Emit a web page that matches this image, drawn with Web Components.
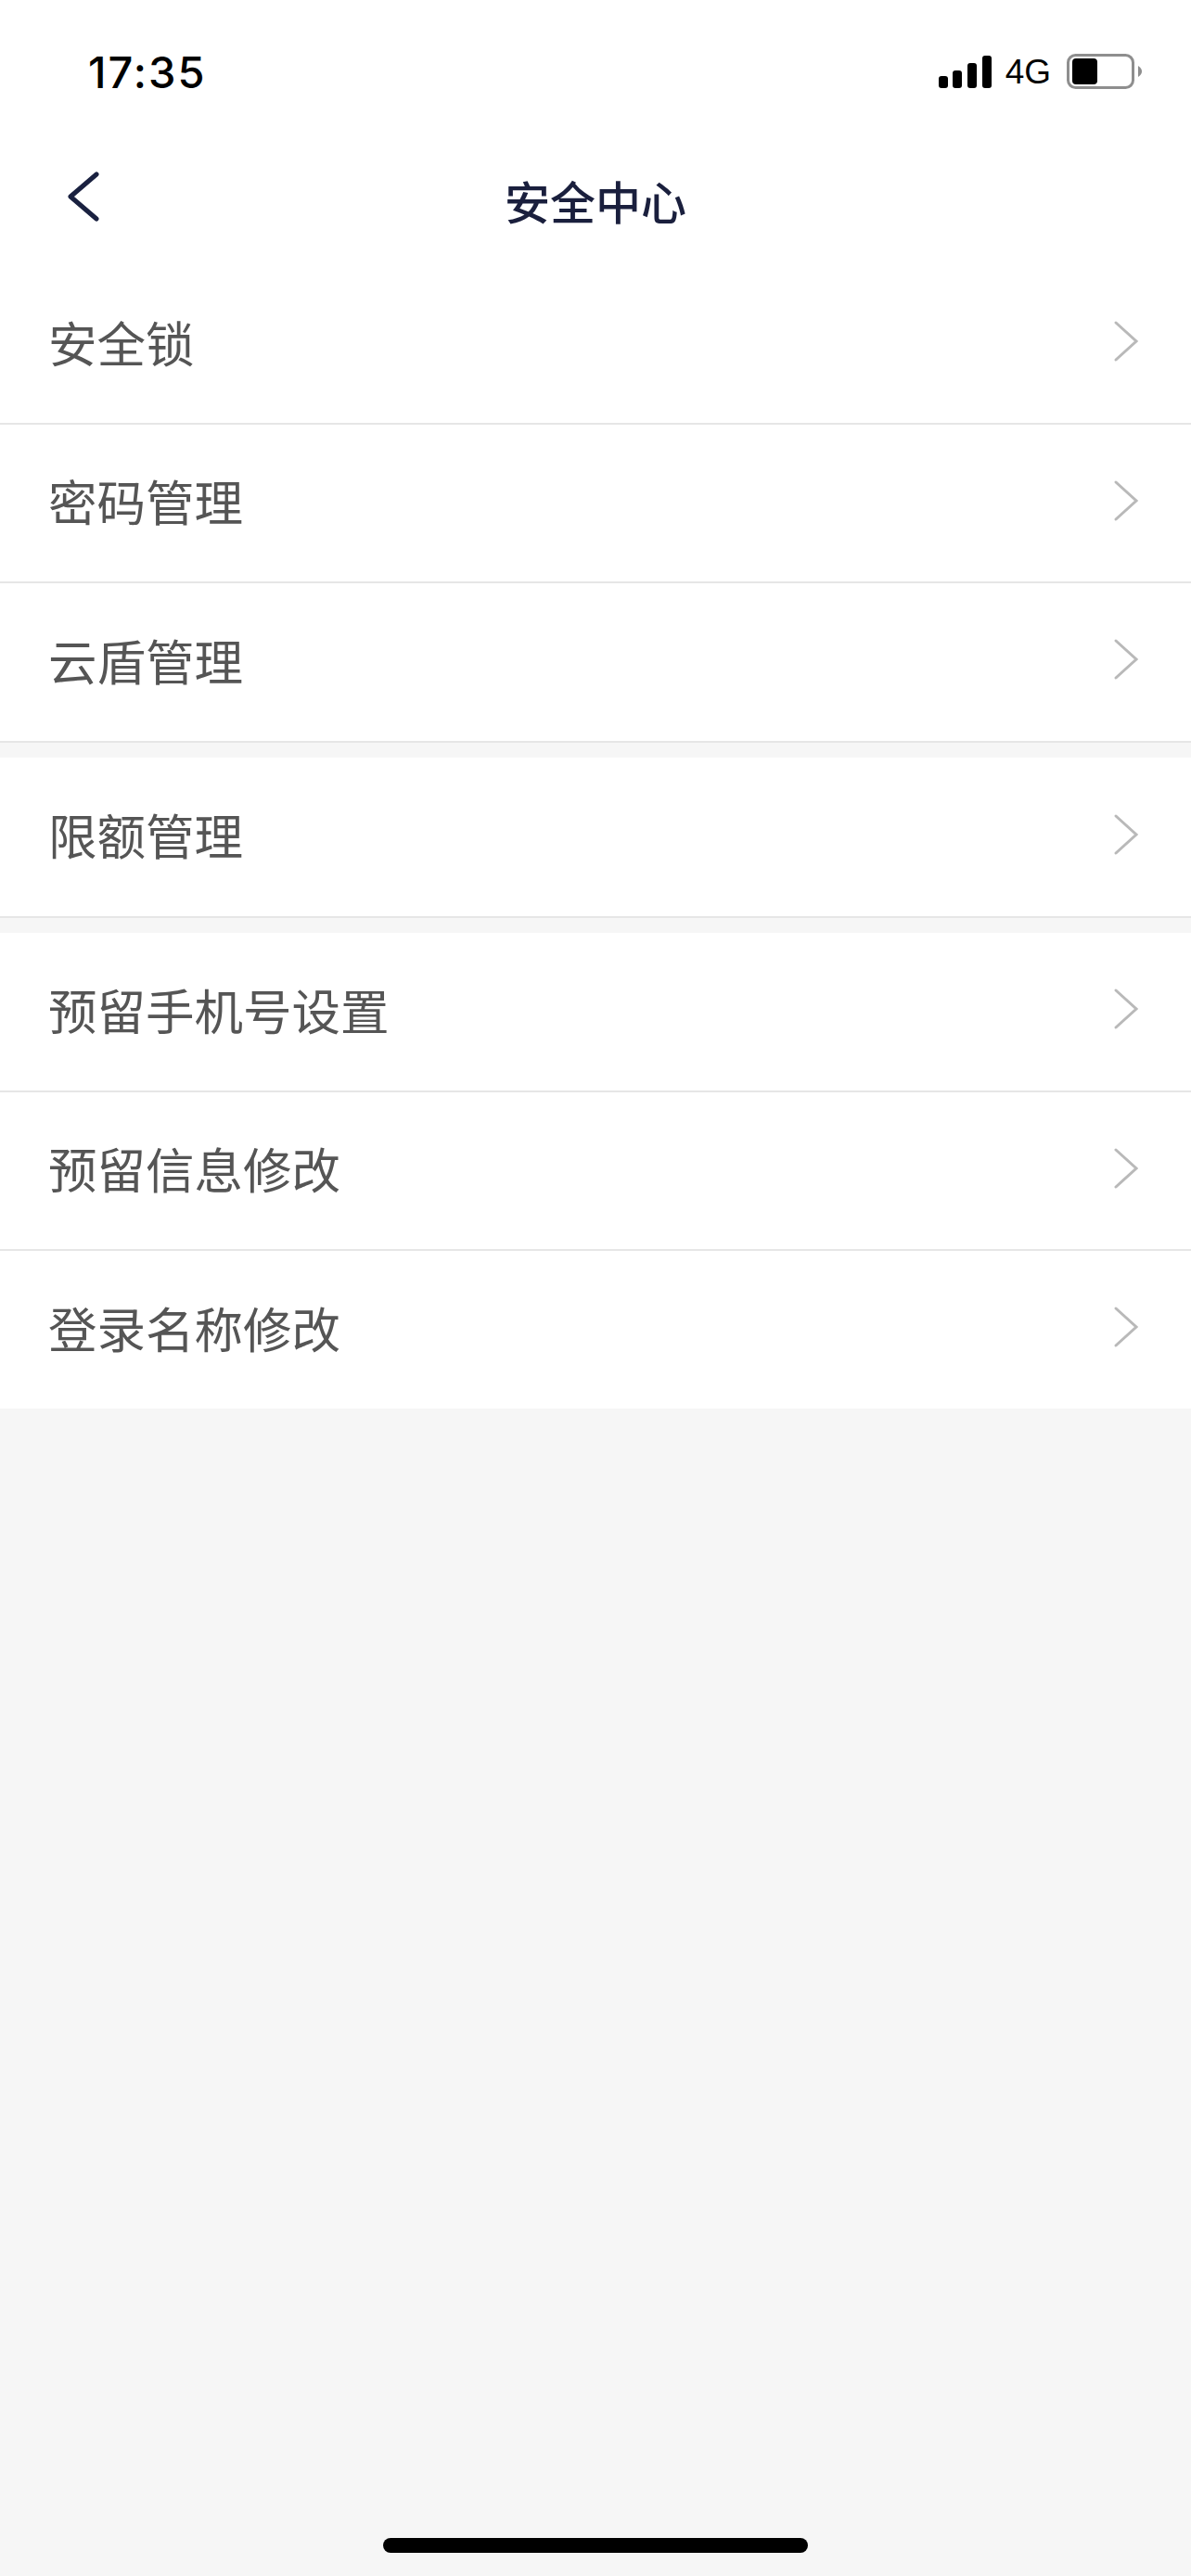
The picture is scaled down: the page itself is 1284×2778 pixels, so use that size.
<!DOCTYPE html>
<html lang="zh">
<head>
<meta charset="utf-8">
<title>安全中心</title>
<style>
  html, body { margin: 0; padding: 0; }
  body {
    width: 1284px;
    height: 2778px;
    overflow: hidden;
    display: flex;
    flex-direction: column;
    background: #f6f6f6;
    font-family: "Noto Sans CJK SC", "Liberation Sans", sans-serif;
  }
</style>
</head>
<body>
  <status-bar time="17:35" network="4G"></status-bar>
  <nav-header title="安全中心"></nav-header>

  <menu-group>
    <menu-row height="172">安全锁</menu-row>
    <menu-row height="171">密码管理</menu-row>
    <menu-row height="172">云盾管理</menu-row>
  </menu-group>
  <menu-group>
    <menu-row height="173">限额管理</menu-row>
  </menu-group>
  <menu-group>
    <menu-row height="172">预留手机号设置</menu-row>
    <menu-row height="171">预留信息修改</menu-row>
    <menu-row height="170" last>登录名称修改</menu-row>
  </menu-group>

  <home-indicator></home-indicator>

<script>
class StatusBar extends HTMLElement {
  constructor() {
    super();
    this.attachShadow({ mode: 'open' });
  }

  connectedCallback() {
    const time = this.getAttribute('time');
    const network = this.getAttribute('network');

    this.shadowRoot.innerHTML = `
      <style>
        :host {
          display: flex;
          align-items: center;
          justify-content: space-between;
          height: 122px;
          padding: 32px 53px 0 95px;
          box-sizing: border-box;
          background: #fff;
          color: #000;
          font-family: "Liberation Sans", Arial, sans-serif;
        }
        .time {
          font-family: Inter, "Liberation Sans", sans-serif;
          font-size: 47px;
          font-weight: 500;
          line-height: 1;
          letter-spacing: 2px;
        }
        .right {
          display: flex;
          align-items: center;
        }
        .signal {
          display: flex;
          align-items: flex-end;
          gap: 5.6px;
          margin-right: 15px;
        }
        .signal i {
          display: block;
          width: 10px;
          background: #000;
          border-radius: 3px;
        }
        .network {
          font-size: 37px;
          line-height: 1;
          margin-right: 17px;
        }
        .battery {
          display: block;
        }
      </style>
      <span class="time">${time}</span>
      <div class="right">
        <div class="signal">
          <i style="height:13px"></i><i style="height:19px"></i><i style="height:27px"></i><i style="height:35px"></i>
        </div>
        <span class="network">${network}</span>
        <svg class="battery" width="81" height="38" viewBox="0 0 81 38">
          <rect x="1.5" y="1.5" width="70" height="35" rx="8" fill="none" stroke="#8e8e8e" stroke-width="3"/>
          <rect x="6" y="5" width="27" height="28" rx="4" fill="#000"/>
          <path d="M77 13 C80 15 81 17 81 19 C81 21 80 23 77 25 Z" fill="#8e8e8e"/>
        </svg>
      </div>
    `;
  }
}

class NavHeader extends HTMLElement {
  constructor() {
    super();
    this.attachShadow({ mode: 'open' });
  }

  connectedCallback() {
    const title = this.getAttribute('title');

    this.shadowRoot.innerHTML = `
      <style>
        :host {
          display: grid;
          grid-template-columns: 1fr auto 1fr;
          align-items: center;
          height: 164px;
          padding-top: 22px;
          box-sizing: border-box;
          background: #fff;
        }
        .back {
          display: block;
          margin-left: 72px;
          margin-top: -6px;
        }
        h1 {
          margin: 0;
          font-family: "Noto Sans CJK SC", "Liberation Sans", sans-serif;
          font-size: 49px;
          font-weight: 500;
          line-height: 1;
          color: #1a1f3d;
        }
      </style>
      <svg class="back" width="36" height="54" viewBox="0 0 36 54">
        <path d="M32 3 L4 27 L32 51" fill="none" stroke="#1a2140" stroke-width="5" stroke-linecap="round" stroke-linejoin="round"/>
      </svg>
      <h1>${title}</h1>
      <span></span>
    `;
  }
}

class MenuGroup extends HTMLElement {
  constructor() {
    super();
    this.attachShadow({ mode: 'open' });
    this.shadowRoot.innerHTML = `
      <style>
        :host {
          display: block;
          background: #fff;
          margin-bottom: 16px;
        }
      </style>
      <slot></slot>
    `;
  }
}

class MenuRow extends HTMLElement {
  constructor() {
    super();
    this.attachShadow({ mode: 'open' });
  }

  connectedCallback() {
    const height = this.getAttribute('height') || 171;
    const last = this.hasAttribute('last');

    this.shadowRoot.innerHTML = `
      <style>
        :host {
          display: flex;
          align-items: center;
          justify-content: space-between;
          height: ${height}px;
          box-sizing: border-box;
          padding: 0 56px 0 52px;
          background: #fff;
          border-bottom: ${last ? '0' : '2px solid #e6e6e6'};
          color: #555;
          font-size: 52.5px;
          font-weight: 400;
        }
        .label {
          line-height: 1;
          margin-top: -6px;
        }
        svg {
          display: block;
          margin-top: -6px;
        }
      </style>
      <span class="label"><slot></slot></span>
      <svg width="28" height="46" viewBox="0 0 28 46">
        <path d="M3 3 L25 23 L3 43" fill="none" stroke="#b9b9b9" stroke-width="3" stroke-linecap="round" stroke-linejoin="miter"/>
      </svg>
    `;
  }
}

class HomeIndicator extends HTMLElement {
  constructor() {
    super();
    this.attachShadow({ mode: 'open' });
    this.shadowRoot.innerHTML = `
      <style>
        :host {
          display: flex;
          justify-content: center;
          margin-top: auto;
          padding-bottom: 25px;
        }
        div {
          width: 458px;
          height: 16px;
          border-radius: 8px;
          background: #000;
        }
      </style>
      <div></div>
    `;
  }
}

customElements.define('status-bar', StatusBar);
customElements.define('nav-header', NavHeader);
customElements.define('menu-group', MenuGroup);
customElements.define('menu-row', MenuRow);
customElements.define('home-indicator', HomeIndicator);
</script>
</body>
</html>
